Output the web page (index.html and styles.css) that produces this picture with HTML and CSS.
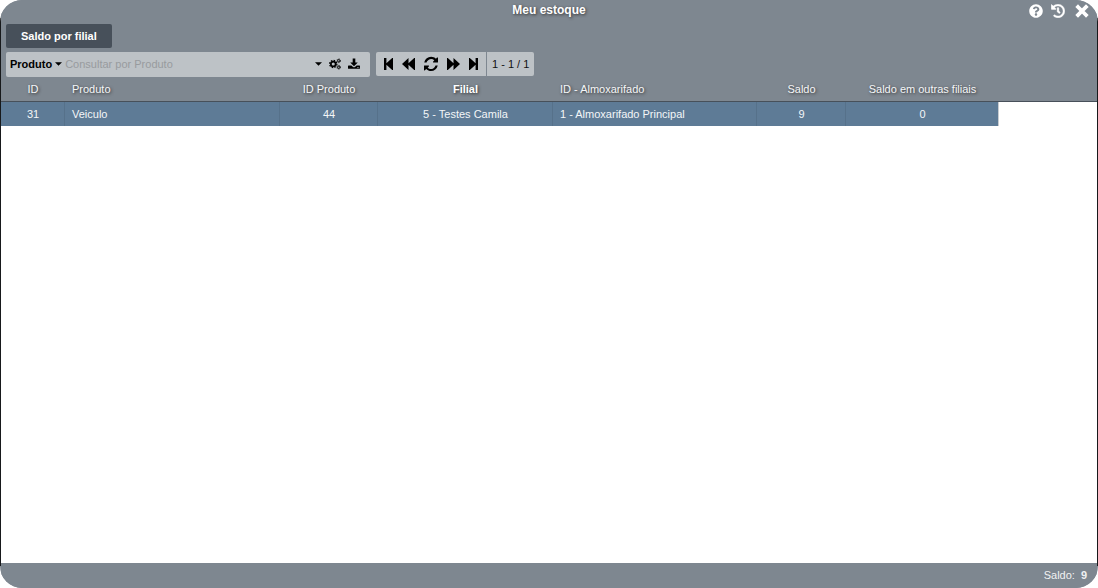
FILE: index.html
```html
<!DOCTYPE html>
<html lang="pt-BR">
<head>
<meta charset="utf-8">
<title>Meu estoque</title>
<link rel="stylesheet" href="styles.css">
</head>
<body>
<main class="window">
  <header class="titlebar">
    <h1 class="title">Meu estoque</h1>
    <div class="window-actions">
      <button type="button" aria-label="Ajuda"><svg class="icon-lg" viewBox="0 0 512 512"><path d="M504 256c0 136.997-111.043 248-248 248S8 392.997 8 256C8 119.083 119.043 8 256 8s248 111.083 248 248zM262.655 90c-54.497 0-89.255 22.957-116.549 63.758-3.536 5.286-2.353 12.415 2.715 16.258l34.699 26.31c5.205 3.947 12.621 3.008 16.665-2.122 17.864-22.658 30.113-35.797 57.303-35.797 20.429 0 45.698 13.148 45.698 32.958 0 14.976-12.363 22.667-32.534 33.976C247.128 238.528 216 254.941 216 296v4c0 6.627 5.373 12 12 12h56c6.627 0 12-5.373 12-12v-1.333c0-28.462 83.186-29.647 83.186-106.667 0-58.002-60.165-102-116.531-102zM256 338c-25.365 0-46 20.635-46 46 0 25.364 20.635 46 46 46s46-20.636 46-46c0-25.365-20.635-46-46-46z"/></svg></button>
      <button type="button" aria-label="Histórico"><svg class="icon-lg" viewBox="0 0 512 512"><path d="M504 255.531c.253 136.64-111.18 248.372-247.82 248.468-59.015.042-113.223-20.53-155.822-54.911-11.077-8.94-11.905-25.541-1.839-35.607l11.267-11.267c8.609-8.609 22.353-9.551 31.891-1.984C173.062 425.135 212.781 440 256 440c101.705 0 184-82.311 184-184 0-101.705-82.311-184-184-184-48.814 0-93.149 18.969-126.068 49.932l50.754 50.754c10.08 10.08 2.941 27.314-11.313 27.314H24c-8.837 0-16-7.163-16-16V38.627c0-14.254 17.234-21.393 27.314-11.314l49.372 49.372C129.209 34.136 189.552 8 256 8c136.81 0 247.747 110.78 248 247.531zm-180.912 78.784l9.823-12.63c8.138-10.463 6.253-25.542-4.21-33.679L288 256.349V152c0-13.255-10.745-24-24-24h-16c-13.255 0-24 10.745-24 24v135.651l65.409 50.874c10.463 8.137 25.541 6.253 33.679-4.21z" stroke="currentColor" stroke-width="14"/></svg></button>
      <button type="button" class="close" aria-label="Fechar"><svg class="icon-lg" viewBox="0 0 14 14"><path d="M3 3l8 8M11 3l-8 8" stroke="currentColor" stroke-width="3.800" stroke-linecap="square"/></svg></button>
    </div>
  </header>

  <nav class="tabs">
    <button type="button" class="tab">Saldo por filial</button>
  </nav>

  <div class="toolbar">
    <div class="search">
      <button type="button" class="field-picker">Produto<svg class="caret" viewBox="0 0 8 4"><path d="M0 0h8L4 4z"/></svg></button>
      <input type="text" class="query" placeholder="Consultar por Produto" aria-label="Consultar por Produto">
      <button type="button" aria-label="Opções"><svg class="caret" viewBox="0 0 8 4"><path d="M0 0h8L4 4z"/></svg></button>
      <button type="button" aria-label="Configurações"><svg class="icon-sm" viewBox="0 0 24 24"><g fill="none" stroke="currentColor"><circle cx="8.500" cy="12" r="4.800" stroke-width="3.400"/><circle cx="8.500" cy="12" r="7.300" stroke-width="2.400" stroke-dasharray="3 2.733"/><circle cx="19.500" cy="5.500" r="2.300" stroke-width="2"/><circle cx="19.500" cy="5.500" r="3.800" stroke-width="1.600" stroke-dasharray="2 1.980"/><circle cx="19.500" cy="18.500" r="2.300" stroke-width="2"/><circle cx="19.500" cy="18.500" r="3.800" stroke-width="1.600" stroke-dasharray="2 1.980"/></g></svg></button>
      <button type="button" aria-label="Baixar"><svg class="icon-sm" viewBox="0 0 512 512"><path d="M200 20h112v170h104L256 355 96 190h104zM24 316h120l70 66q42 34 84 0l70-66h120q24 0 24 24v96q0 24-24 24H24q-24 0-24-24v-96q0-24 24-24zm360 80v34h30v-34zm60 0v34h30v-34z"/></svg></button>
    </div>
    <div class="pager">
      <div class="pager-buttons">
        <button type="button" aria-label="Primeiro"><svg class="icon-step" viewBox="0 0 9 12"><path d="M0 0h2.400v5.300L8.200 0H9v12h-.800L2.400 6.700V12H0z"/></svg></button>
        <button type="button" aria-label="Anterior"><svg class="icon-skip" viewBox="0 0 13 12"><path d="M0 6L6.500 0v5.200L12.200 0H13v12h-.800L6.500 6.800V12z"/></svg></button>
        <button type="button" aria-label="Atualizar"><svg class="icon-refresh" viewBox="0 128 1536 1536"><path d="M1511 1056q0 5-1 7-64 268-268 434.500T764 1664q-146 0-282.500-55T238 1452l-129 129q-19 19-45 19t-45-19-19-45v-420q0-26 19-45t45-19h420q26 0 45 19t19 45-19 45l-122 150q71 66 161 102t187 36q134 0 250-65t186-179q11-17 53-117 8-23 30-23h206q31 0 31 11zM1536 256v420q0 26-19 45t-45 19h-420q-26 0-45-19t-19-45 19-45l122-142q-148-137-349-137-134 0-250 65T344 596q-11 17-53 117-8 23-30 23H62q-32 0-32-32v-7q65-268 270-434.500T780 96q146 0 284 55.500T1309 308l118-116q19-19 45-19t45 19 19 64z"/></svg></button>
        <button type="button" aria-label="Próximo"><svg class="icon-skip" viewBox="0 0 13 12"><path d="M13 6L6.500 0v5.200L.800 0H0v12h.800l5.700-5.200V12z"/></svg></button>
        <button type="button" aria-label="Último"><svg class="icon-step" viewBox="0 0 9 12"><path d="M9 0H6.600v5.300L.800 0H0v12h.800l5.800-5.300V12H9z"/></svg></button>
      </div>
      <span class="pager-count">1 - 1 / 1</span>
    </div>
  </div>

  <section class="grid">
    <table class="stock">
      <colgroup><col class="c-id"><col class="c-product"><col class="c-pid"><col class="c-branch"><col class="c-store"><col class="c-balance"><col class="c-other"><col></colgroup>
      <thead>
        <tr><th>ID</th><th class="left">Produto</th><th>ID Produto</th><th class="sorted">Filial</th><th class="left">ID - Almoxarifado</th><th>Saldo</th><th>Saldo em outras filiais</th><th></th></tr>
      </thead>
      <tbody>
        <tr><td>31</td><td class="left">Veiculo</td><td>44</td><td>5 - Testes Camila</td><td class="left">1 - Almoxarifado Principal</td><td>9</td><td>0</td><td class="blank"></td></tr>
      </tbody>
    </table>
  </section>

  <footer class="footer">Saldo: <b>9</b></footer>
</main>
</body>
</html>
```
FILE: styles.css
```css
* { box-sizing: border-box; }

body {
  margin: 0;
  background: #fff;
  font: 11px/16px "Liberation Sans", Arial, sans-serif;
}

button {
  display: inline-flex;
  align-items: center;
  padding: 0;
  border: 0;
  background: none;
  color: inherit;
  font: inherit;
  cursor: pointer;
}

svg { display: block; fill: currentColor; flex: none; }

/* The 1px side padding shows the dark frame line between the rounded corners. */
.window {
  display: flex;
  flex-direction: column;
  min-height: 100vh;
  overflow: hidden;
  padding: 0 1px;
  border-radius: 22px;
  background: linear-gradient(#7e8790 18px, #17191b 18px calc(100% - 22px), #7e8790 0);
}

.titlebar,
.tabs,
.toolbar,
.footer,
.stock th { background: #7e8790; }

.titlebar {
  display: grid;
  grid-template-columns: 1fr auto 1fr;
  height: 24px;
  color: #fff;
}

.title {
  grid-column: 2;
  margin: 2px 0 0;
  font-size: 12px;
  line-height: 16px;
  text-shadow: 1px 1px 3px #333;
}

.window-actions {
  display: flex;
  justify-content: flex-end;
  align-items: center;
  gap: 8px;
  padding: 0 8px 2px 0;
}

.window-actions .close { margin-left: 2px; }

.icon-lg { width: 14px; height: 14px; }
.icon-sm { width: 12px; height: 12px; }
.icon-step { width: 9px; height: 12px; }
.icon-skip { width: 13px; height: 12px; }
.icon-refresh { width: 14px; height: 14px; overflow: visible; }
.caret { width: 7px; height: 4px; }

.tabs { padding: 0 5px; }

.tab {
  height: 24px;
  padding: 0 15px;
  border-radius: 2px;
  background: #47505a;
  color: #fff;
  font-weight: bold;
}

.toolbar {
  display: flex;
  align-items: flex-start;
  gap: 6px;
  padding: 4px 5px 0;
}

.search {
  display: flex;
  align-items: center;
  gap: 7px;
  width: 364px;
  height: 25px;
  padding: 0 10px 1px 4px;
  border-radius: 2px;
  background: #bdc2c6;
}

.field-picker { gap: 3px; font-weight: bold; }

.query {
  flex: 1;
  min-width: 0;
  margin-left: -4px;
  padding: 0;
  border: 0;
  outline: 0;
  background: none;
  font: inherit;
}

.query::placeholder { color: #989b9e; opacity: 1; }

.pager { display: flex; gap: 1px; height: 24px; }

.pager-buttons {
  display: flex;
  align-items: center;
  gap: 9px;
  padding: 0 8px;
  border-radius: 2px 0 0 2px;
  background: #bdc2c6;
}

.pager-count {
  padding: 4px 5px;
  border-radius: 0 2px 2px 0;
  background: #bdc2c6;
  color: #111;
}

.grid { flex: 1; background: #fff; }

.stock {
  width: 100%;
  table-layout: fixed;
  border-collapse: separate;
  border-spacing: 0;
}

.c-id { width: 64px; }
.c-product { width: 215px; }
.c-pid { width: 98px; }
.c-branch { width: 175px; }
.c-store { width: 204px; }
.c-balance { width: 89px; }
.c-other { width: 153px; }

.stock th,
.stock td {
  height: 24px;
  padding: 0 7px;
  color: #f4f6f8;
  font-weight: normal;
  text-align: center;
  white-space: nowrap;
}

.stock th {
  height: 25px;
  border-bottom: 1px solid #47505a;
  text-shadow: 1px 1px 3px #333;
}

.stock td {
  padding-right: 6px;
  border-right: 1px solid #56718a;
  background: #5e7b96;
}

.stock .left { text-align: left; }
.stock .sorted { color: #fff; font-weight: bold; }
.stock td:nth-last-child(2) { border-right-color: #c8ccd0; }
.stock .blank { border: 0; background: #fff; }

.footer {
  display: flex;
  justify-content: flex-end;
  align-items: center;
  gap: 6px;
  height: 25px;
  padding: 0 10px 1px 0;
  color: #f0f1f2;
}
```
